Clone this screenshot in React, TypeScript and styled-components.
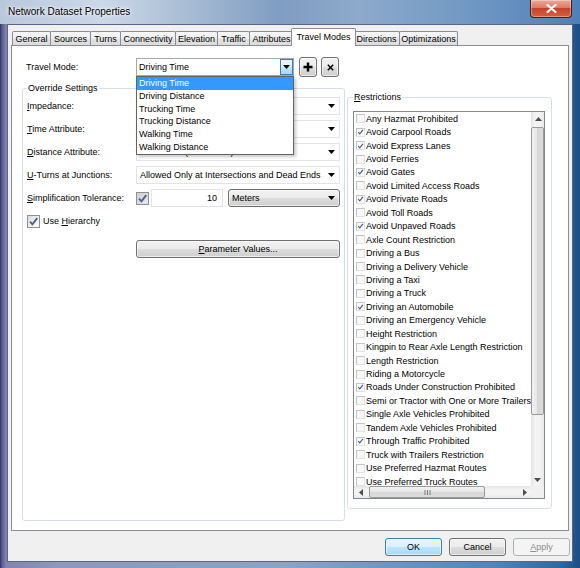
import React from "react";
import styled, { createGlobalStyle, css } from "styled-components";

const GlobalStyle = createGlobalStyle`
  html, body {
    margin: 0;
    padding: 0;
  }
  body {
    font-family: "Liberation Sans", Arial, sans-serif;
    font-size: 9px;
    color: #000;
  }
  * {
    box-sizing: border-box;
  }
`;

const tabs = [
  { label: "General", width: 39 },
  { label: "Sources", width: 41 },
  { label: "Turns", width: 31 },
  { label: "Connectivity", width: 56 },
  { label: "Elevation", width: 43 },
  { label: "Traffic", width: 33 },
  { label: "Attributes", width: 45 },
  { label: "Travel Modes", width: 61, active: true },
  { label: "Directions", width: 47 },
  { label: "Optimizations", width: 59 },
];

const travelModes = [
  "Driving Time",
  "Driving Distance",
  "Trucking Time",
  "Trucking Distance",
  "Walking Time",
  "Walking Distance",
];

const restrictions: Array<[string, boolean]> = [
  ["Any Hazmat Prohibited", false],
  ["Avoid Carpool Roads", true],
  ["Avoid Express Lanes", true],
  ["Avoid Ferries", false],
  ["Avoid Gates", true],
  ["Avoid Limited Access Roads", false],
  ["Avoid Private Roads", true],
  ["Avoid Toll Roads", false],
  ["Avoid Unpaved Roads", true],
  ["Axle Count Restriction", false],
  ["Driving a Bus", false],
  ["Driving a Delivery Vehicle", false],
  ["Driving a Taxi", false],
  ["Driving a Truck", false],
  ["Driving an Automobile", true],
  ["Driving an Emergency Vehicle", false],
  ["Height Restriction", false],
  ["Kingpin to Rear Axle Length Restriction", false],
  ["Length Restriction", false],
  ["Riding a Motorcycle", false],
  ["Roads Under Construction Prohibited", true],
  ["Semi or Tractor with One or More Trailers", false],
  ["Single Axle Vehicles Prohibited", false],
  ["Tandem Axle Vehicles Prohibited", false],
  ["Through Traffic Prohibited", true],
  ["Truck with Trailers Restriction", false],
  ["Use Preferred Hazmat Routes", false],
  ["Use Preferred Truck Routes", false],
];

const DownArrow = ({ color = "#000" }: { color?: string }) => (
  <svg width="7" height="4" viewBox="0 0 7 4">
    <path d="M0 0h7L3.5 4z" fill={color} />
  </svg>
);

const SmallArrow = ({ dir }: { dir: "up" | "down" | "left" | "right" }) => {
  const d = {
    up: "M0 4h7L3.5 0z",
    down: "M0 0h7L3.5 4z",
    left: "M4 0v7L0 3.5z",
    right: "M0 0v7L4 3.5z",
  }[dir];
  const w = dir === "up" || dir === "down" ? 7 : 4;
  const h = dir === "up" || dir === "down" ? 4 : 7;
  return (
    <svg width={w} height={h} viewBox={`0 0 ${w} ${h}`}>
      <path d={d} fill="#4d4d4d" />
    </svg>
  );
};

const Tick = ({ size, color }: { size: number; color: string }) => (
  <svg width={size} height={size} viewBox="0 0 10 10">
    <path d="M1.8 5.2 L4 7.6 L8.4 2" fill="none" stroke={color} strokeWidth="1.7" />
  </svg>
);

const Window = styled.div`
  width: 580px;
  height: 568px;
  display: flex;
  flex-direction: column;
  overflow: hidden;
  background: linear-gradient(
    90deg,
    #303264 0px,
    #5a5c8e 2px,
    #8284ae 6px,
    #8c98bd 10%,
    #8aa4c6 50%,
    #4f86bd 85%,
    #2b67a3 97%,
    #1d4c84 100%
  );
`;

const TitleBar = styled.div`
  height: 24px;
  display: flex;
  align-items: flex-start;
  background: linear-gradient(
    90deg,
    #bac8dc 0%,
    #cbd8e7 18%,
    #a9bdd5 32%,
    #7f9dc2 48%,
    #8daacb 62%,
    #6f97c3 82%,
    #4f80b7 100%
  );
`;

const Title = styled.div`
  padding-left: 8px;
  line-height: 24px;
  font-size: 10px;
  color: #000;
  text-shadow: 0 0 5px #fff, 0 0 3px #fff;
`;

const CloseButton = styled.div`
  margin-left: auto;
  margin-right: 8px;
  width: 42px;
  height: 18px;
  border: 1px solid #4b1a12;
  border-top: none;
  border-radius: 0 0 4px 4px;
  background: linear-gradient(#e9aa9b 0%, #dc7c66 45%, #c7432a 50%, #d5603f 100%);
  box-shadow: inset 0 0 0 1px rgba(255, 255, 255, 0.35);
  display: flex;
  align-items: center;
  justify-content: center;
`;

const Frame = styled.div`
  flex: 1;
  display: flex;
  padding: 0 7px 6px 7px;
`;

const Client = styled.div`
  flex: 1;
  display: flex;
  flex-direction: column;
  background: #f0f0f0;
  border: 1px solid #5a6682;
  padding: 3px 3px 0;
`;

const TabStrip = styled.div`
  display: flex;
  align-items: flex-end;
  height: 17px;
  padding-left: 1px;
  position: relative;
  z-index: 1;
`;

const Tab = styled.div<{ $active?: boolean; $width: number }>`
  position: relative;
  width: ${(p) => p.$width + (p.$active ? 4 : 0)}px;
  height: ${(p) => (p.$active ? 18 : 14)}px;
  margin: 0 -1px 0 0;
  border: 1px solid #898c95;
  border-bottom: none;
  border-radius: 2px 2px 0 0;
  display: flex;
  align-items: center;
  justify-content: center;
  white-space: nowrap;
  background: linear-gradient(#f7f7f7, #ededed 50%, #e3e3e3 51%, #dcdcdc);
  ${(p) =>
    p.$active &&
    css`
      margin: 0 -3px -1px -2px;
      padding-bottom: 2px;
      background: #fff;
      z-index: 2;
    `}
`;

const Panel = styled.div`
  height: 486px;
  background: #fff;
  border: 1px solid #898c95;
  padding: 11px 0 9px 10px;
  display: grid;
  grid-template-columns: 323px 205px;
  column-gap: 2px;
  align-items: start;
`;

const LeftColumn = styled.div`
  align-self: stretch;
  display: flex;
  flex-direction: column;
`;

const TravelRow = styled.div`
  display: flex;
  align-items: center;
  height: 20px;
`;

const RowLabel = styled.span<{ $width: number }>`
  width: ${(p) => p.$width}px;
  padding-left: 4px;
  white-space: nowrap;
`;

const Mnemonic = styled.span`
  text-decoration: underline;
`;

const ComboBox = styled.div<{ $kind?: "flat" | "button" | "open"; $width?: number }>`
  position: relative;
  display: flex;
  align-items: center;
  height: 18px;
  width: ${(p) => (p.$width ? `${p.$width}px` : "auto")};
  padding-left: 3px;
  background: #fff;
  border: 1px solid #e2e3e6;
  ${(p) =>
    p.$kind === "open" &&
    css`
      border-color: #a4a9b1;
      padding-left: 2px;
    `}
  ${(p) =>
    p.$kind === "button" &&
    css`
      border-color: #707070;
      border-radius: 3px;
      background: linear-gradient(#f2f2f2 0%, #ebebeb 49%, #dddddd 50%, #cfcfcf 100%);
      box-shadow: inset 0 0 0 1px rgba(255, 255, 255, 0.6);
    `}
`;

const ComboText = styled.span`
  flex: 1;
  overflow: hidden;
  white-space: nowrap;
`;

const ComboArrow = styled.span<{ $hot?: boolean }>`
  align-self: stretch;
  width: 16px;
  display: flex;
  align-items: center;
  justify-content: center;
  ${(p) =>
    p.$hot &&
    css`
      width: 13px;
      border: 1px solid #3c7fb1;
      background: linear-gradient(#eaf6fd 0%, #d9f0fc 49%, #bee6fd 50%, #a7d9f5 100%);
    `}
`;

const DropList = styled.ul`
  position: absolute;
  top: calc(100% + 1px);
  left: -1px;
  right: -1px;
  margin: 0;
  padding: 0;
  list-style: none;
  background: #fff;
  border: 1px solid #646464;
  box-shadow: 2px 2px 3px rgba(0, 0, 0, 0.22);
  z-index: 10;
`;

const DropItem = styled.li<{ $selected?: boolean }>`
  height: 12.8px;
  line-height: 12.8px;
  padding-left: 2px;
  white-space: nowrap;
  background: ${(p) => (p.$selected ? "#3399ff" : "transparent")};
  color: ${(p) => (p.$selected ? "#fff" : "#000")};
`;

const IconButton = styled.div`
  width: 18px;
  height: 20px;
  margin-left: 5px;
  border: 1px solid #707070;
  border-radius: 3px;
  background: linear-gradient(#f2f2f2 0%, #ebebeb 49%, #dddddd 50%, #cfcfcf 100%);
  box-shadow: inset 0 0 0 1px rgba(255, 255, 255, 0.6);
  display: flex;
  align-items: center;
  justify-content: center;
  & + & {
    margin-left: 4px;
  }
`;

const GroupBox = styled.fieldset`
  margin: 0;
  min-width: 0;
  border: 1px solid #d5dfe5;
  border-radius: 3px;
`;

const GroupLegend = styled.legend`
  padding: 0 1px;
  line-height: 11px;
  font-size: 9px;
`;

const OverrideGroup = styled(GroupBox)`
  flex: 1;
  margin-top: 6px;
  padding: 3px 4px 0 4px;
`;

const RestrictionsGroup = styled(GroupBox)`
  margin-top: 35px;
  padding: 8px 6px 9px 5px;
`;

const SettingsGrid = styled.div`
  display: grid;
  grid-template-columns: 109px 204px;
  grid-auto-rows: 18px;
  row-gap: 5px;
  align-items: center;
`;

const FieldLabel = styled.span`
  white-space: nowrap;
`;

const ToleranceRow = styled.div`
  display: flex;
  align-items: center;
  height: 18px;
`;

const TextField = styled.div`
  width: 72px;
  height: 18px;
  margin: 0 5px 0 2px;
  border: 1px solid #e2e3e6;
  background: #fff;
  text-align: right;
  padding-right: 5px;
  line-height: 16px;
`;

const CheckBox = styled.span<{ $muted?: boolean }>`
  flex: none;
  width: 13px;
  height: 13px;
  border: 1px solid #8e8f8f;
  background: ${(p) =>
    p.$muted
      ? "linear-gradient(135deg, #cfcfcf, #e9e9e9)"
      : "linear-gradient(135deg, #dcdcdc, #ffffff)"};
  display: inline-flex;
  align-items: center;
  justify-content: center;
`;

const HierarchyRow = styled.div`
  grid-column: 1 / -1;
  display: flex;
  align-items: center;
  gap: 3px;
`;

const ParamRow = styled.div`
  margin-top: 10px;
  padding-left: 109px;
`;

const PushButton = styled.div<{ $width: number; $default?: boolean; $disabled?: boolean }>`
  width: ${(p) => p.$width}px;
  height: 18px;
  border: 1px solid #707070;
  border-radius: 3px;
  background: linear-gradient(#f2f2f2 0%, #ebebeb 49%, #dddddd 50%, #cfcfcf 100%);
  box-shadow: inset 0 0 0 1px rgba(255, 255, 255, 0.6);
  display: flex;
  align-items: center;
  justify-content: center;
  white-space: nowrap;
  ${(p) =>
    p.$default &&
    css`
      border-color: #3c7fb1;
      background: linear-gradient(#eaf6fd 0%, #d9f0fc 49%, #bee6fd 50%, #a7d9f5 100%);
    `}
  ${(p) =>
    p.$disabled &&
    css`
      border-color: #adb2b5;
      background: #f4f4f4;
      color: #8d8d8d;
      box-shadow: none;
    `}
`;

const ListBox = styled.div`
  height: 388px;
  border: 1px solid #828790;
  background: #fff;
  display: grid;
  grid-template-columns: 1fr 13px;
  grid-template-rows: 1fr 12px;
  overflow: hidden;
`;

const ListItems = styled.div`
  overflow: hidden;
  padding-left: 2px;
`;

const ListRow = styled.div`
  height: 13.44px;
  display: flex;
  align-items: center;
  white-space: nowrap;
`;

const ListCheck = styled.span`
  flex: none;
  width: 9px;
  height: 9px;
  margin-right: 1px;
  border: 1px solid #c4c4c4;
  border-right-color: #e2e2e2;
  border-bottom-color: #e2e2e2;
  background: #f8f8f8;
  display: inline-flex;
  align-items: center;
  justify-content: center;
`;

const VScroll = styled.div`
  display: flex;
  flex-direction: column;
  background: linear-gradient(90deg, #e4e4e4, #f3f3f3 30%, #f3f3f3 70%, #e8e8e8);
`;

const HScroll = styled.div`
  display: flex;
  align-items: stretch;
  background: linear-gradient(#e4e4e4, #f3f3f3 30%, #f3f3f3 70%, #e8e8e8);
`;

const ScrollCorner = styled.div`
  background: #f0f0f0;
`;

const ScrollButton = styled.div<{ $long: number }>`
  flex: none;
  display: flex;
  align-items: center;
  justify-content: center;
  ${(p) => css`
    min-width: ${p.$long}px;
    min-height: ${p.$long}px;
  `}
`;

const Thumb = styled.div<{ $vertical?: boolean; $length: number }>`
  flex: none;
  border: 1px solid #9a9a9a;
  border-radius: 2px;
  display: flex;
  align-items: center;
  justify-content: center;
  ${(p) =>
    p.$vertical
      ? css`
          height: ${p.$length}px;
          margin: 1px 0 0 0;
          background: linear-gradient(90deg, #f2f2f2, #e7e7e7 45%, #d7d7d7 50%, #dcdcdc);
        `
      : css`
          width: ${p.$length}px;
          margin: 0 0 0 2px;
          background: linear-gradient(#f2f2f2, #e7e7e7 45%, #d7d7d7 50%, #dcdcdc);
        `}
`;

const Spacer = styled.div`
  flex: 1;
`;

const Footer = styled.div`
  display: flex;
  justify-content: flex-end;
  gap: 7px;
  margin-top: 7px;
  margin-right: -1px;
`;

export default function App() {
  return (
    <>
      <GlobalStyle />
      <Window>
        <TitleBar>
          <Title>Network Dataset Properties</Title>
          <CloseButton>
            <svg width="11" height="9" viewBox="0 0 11 9">
              <path d="M1.5 1 L9.5 8 M9.5 1 L1.5 8" stroke="#fff" strokeWidth="2.2" strokeLinecap="round" />
            </svg>
          </CloseButton>
        </TitleBar>
        <Frame>
          <Client>
            <TabStrip>
              {tabs.map((t) => (
                <Tab key={t.label} $width={t.width} $active={t.active}>
                  {t.label}
                </Tab>
              ))}
            </TabStrip>
            <Panel>
              <LeftColumn>
                <TravelRow>
                  <RowLabel $width={114}>Travel Mode:</RowLabel>
                  <ComboBox $kind="open" $width={158}>
                    <ComboText>Driving Time</ComboText>
                    <ComboArrow $hot>
                      <DownArrow />
                    </ComboArrow>
                    <DropList>
                      {travelModes.map((m, i) => (
                        <DropItem key={m} $selected={i === 0}>
                          {m}
                        </DropItem>
                      ))}
                    </DropList>
                  </ComboBox>
                  <IconButton>
                    <svg width="10" height="10" viewBox="0 0 10 10">
                      <path d="M5 0.5v9M0.5 5h9" stroke="#000" strokeWidth="2.4" />
                    </svg>
                  </IconButton>
                  <IconButton>
                    <svg width="7" height="7" viewBox="0 0 7 7">
                      <path d="M0.8 0.8L6.2 6.2M6.2 0.8L0.8 6.2" stroke="#000" strokeWidth="1.5" />
                    </svg>
                  </IconButton>
                </TravelRow>
                <OverrideGroup>
                  <GroupLegend>Override Settings</GroupLegend>
                  <SettingsGrid>
                    <FieldLabel>
                      <Mnemonic>I</Mnemonic>mpedance:
                    </FieldLabel>
                    <ComboBox>
                      <ComboText />
                      <ComboArrow>
                        <DownArrow />
                      </ComboArrow>
                    </ComboBox>
                    <FieldLabel>
                      <Mnemonic>T</Mnemonic>ime Attribute:
                    </FieldLabel>
                    <ComboBox>
                      <ComboText />
                      <ComboArrow>
                        <DownArrow />
                      </ComboArrow>
                    </ComboBox>
                    <FieldLabel>
                      <Mnemonic>D</Mnemonic>istance Attribute:
                    </FieldLabel>
                    <ComboBox>
                      <ComboText>Kilometers (Kilometers)</ComboText>
                      <ComboArrow>
                        <DownArrow />
                      </ComboArrow>
                    </ComboBox>
                    <FieldLabel>
                      <Mnemonic>U</Mnemonic>-Turns at Junctions:
                    </FieldLabel>
                    <ComboBox>
                      <ComboText>Allowed Only at Intersections and Dead Ends</ComboText>
                      <ComboArrow>
                        <DownArrow />
                      </ComboArrow>
                    </ComboBox>
                    <FieldLabel>
                      <Mnemonic>S</Mnemonic>implification Tolerance:
                    </FieldLabel>
                    <ToleranceRow>
                      <CheckBox $muted>
                        <Tick size={11} color="#4a5f97" />
                      </CheckBox>
                      <TextField>10</TextField>
                      <ComboBox $kind="button" $width={112}>
                        <ComboText>Meters</ComboText>
                        <ComboArrow>
                          <DownArrow />
                        </ComboArrow>
                      </ComboBox>
                    </ToleranceRow>
                    <HierarchyRow>
                      <CheckBox>
                        <Tick size={11} color="#4d6185" />
                      </CheckBox>
                      <span>
                        Use <Mnemonic>H</Mnemonic>ierarchy
                      </span>
                    </HierarchyRow>
                  </SettingsGrid>
                  <ParamRow>
                    <PushButton $width={204}>
                      <span>
                        <Mnemonic>P</Mnemonic>arameter Values...
                      </span>
                    </PushButton>
                  </ParamRow>
                </OverrideGroup>
              </LeftColumn>
              <RestrictionsGroup>
                <GroupLegend>
                  <Mnemonic>R</Mnemonic>estrictions
                </GroupLegend>
                <ListBox>
                  <ListItems>
                    {restrictions.map(([name, checked]) => (
                      <ListRow key={name}>
                        <ListCheck>{checked && <Tick size={8} color="#4a5f97" />}</ListCheck>
                        {name}
                      </ListRow>
                    ))}
                  </ListItems>
                  <VScroll>
                    <ScrollButton $long={14}>
                      <SmallArrow dir="up" />
                    </ScrollButton>
                    <Thumb $vertical $length={288} />
                    <Spacer />
                    <ScrollButton $long={13}>
                      <SmallArrow dir="down" />
                    </ScrollButton>
                  </VScroll>
                  <HScroll>
                    <ScrollButton $long={13}>
                      <SmallArrow dir="left" />
                    </ScrollButton>
                    <Thumb $length={116}>
                      <svg width="7" height="5" viewBox="0 0 7 5">
                        <path d="M1 0v5M3.5 0v5M6 0v5" stroke="#7a7a7a" strokeWidth="1" />
                      </svg>
                    </Thumb>
                    <Spacer />
                    <ScrollButton $long={13}>
                      <SmallArrow dir="right" />
                    </ScrollButton>
                  </HScroll>
                  <ScrollCorner />
                </ListBox>
              </RestrictionsGroup>
            </Panel>
            <Footer>
              <PushButton $width={57} $default>
                OK
              </PushButton>
              <PushButton $width={57}>Cancel</PushButton>
              <PushButton $width={57} $disabled>
                <span>
                  <Mnemonic>A</Mnemonic>pply
                </span>
              </PushButton>
            </Footer>
          </Client>
        </Frame>
      </Window>
    </>
  );
}
